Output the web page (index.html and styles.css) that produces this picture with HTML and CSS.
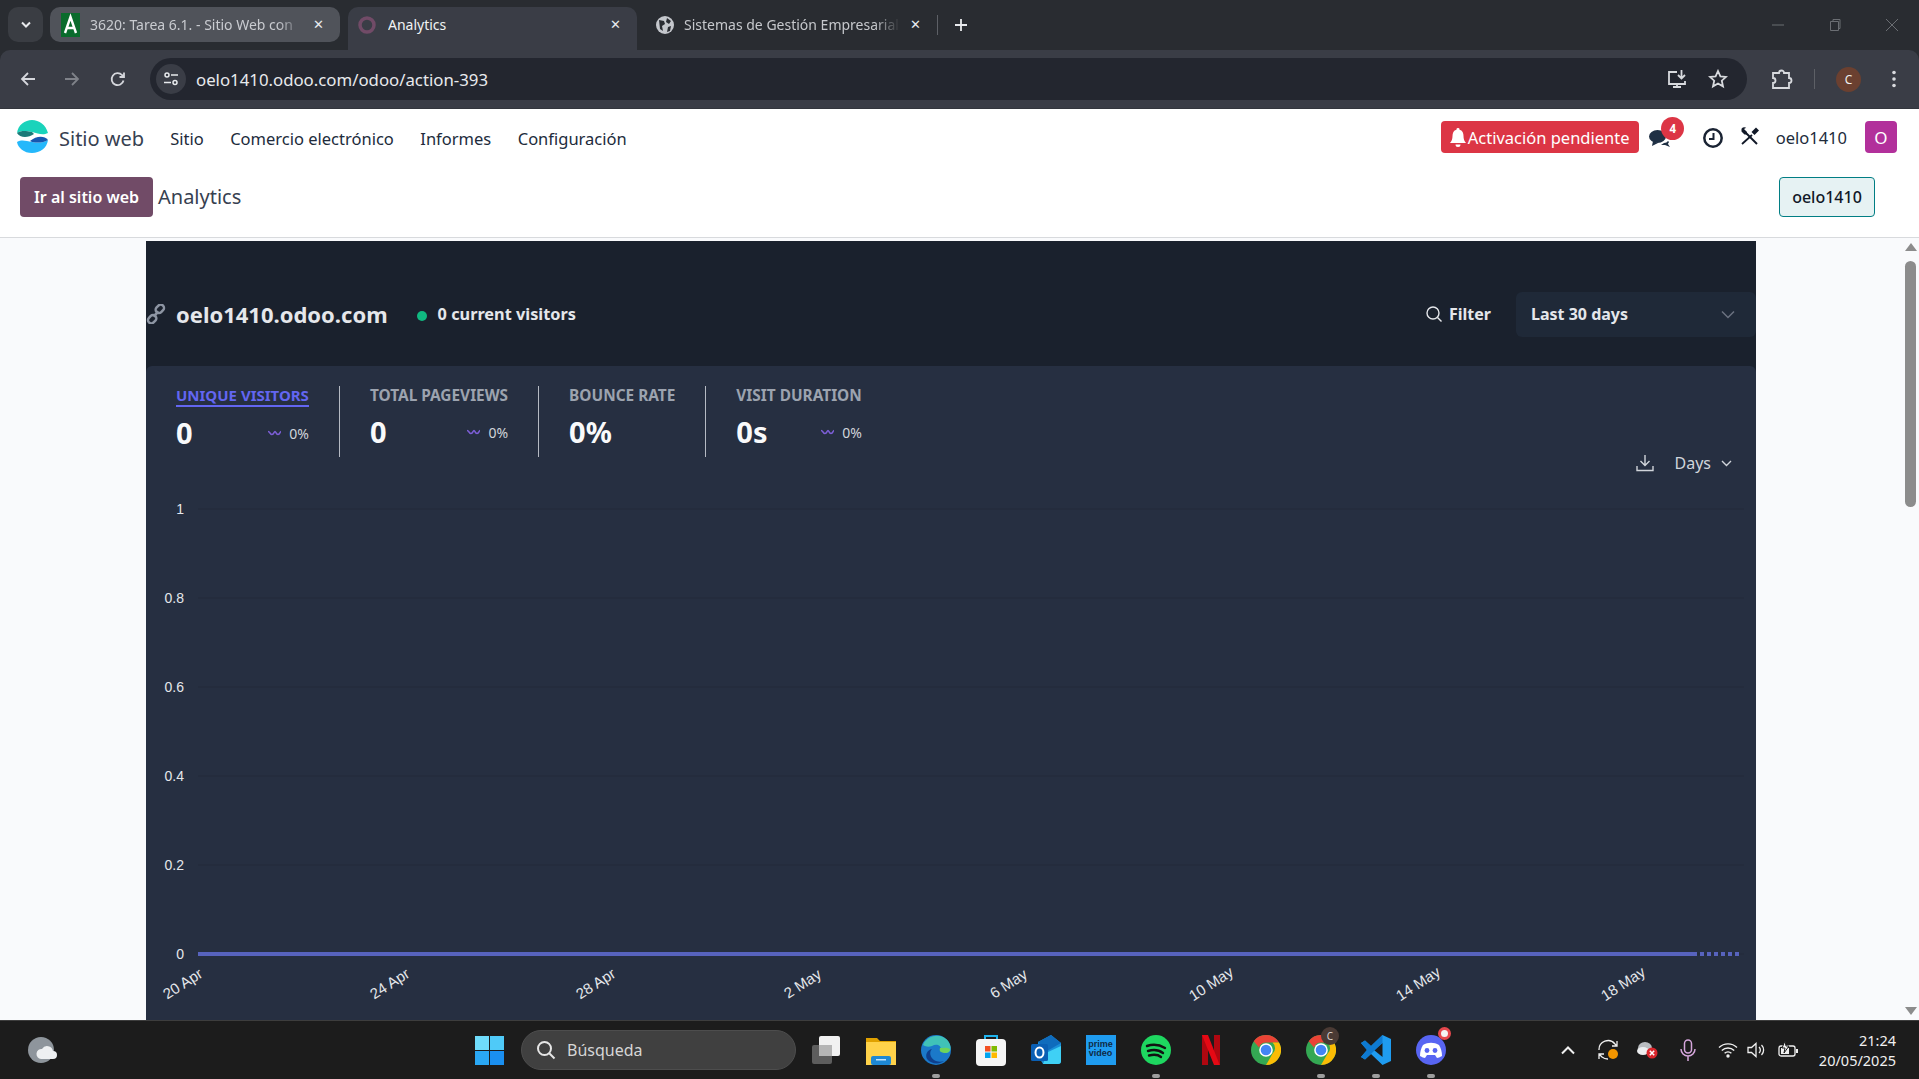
FILE: index.html
```html
<!DOCTYPE html>
<html lang="es">
<head>
<meta charset="utf-8">
<title>Analytics</title>
<link rel="stylesheet" href="styles.css">
</head>
<body>
<header class="tabstrip">
  <div class="tabsearch"><svg width="12" height="8" viewBox="0 0 12 8"><path d="M2 1.500l4 4 4-4" fill="none" stroke="#e8eaed" stroke-width="2"/></svg></div>
  <div class="tab tab-hover">
    <svg class="fav" width="19" height="24" viewBox="0 0 19 24"><rect width="19" height="24" fill="#0a6b2c"/><path d="M4 20L9.500 4 15 20M6.500 15h6" fill="none" stroke="#fff" stroke-width="2.400"/></svg>
    <span class="tabtext fade">3620: Tarea 6.1. - Sitio Web con</span>
    <span class="tabx">✕</span>
  </div>
  <div class="tab tab-active">
    <svg class="fav" width="18" height="18" viewBox="0 0 18 18"><circle cx="9" cy="9" r="7" fill="none" stroke="#714b67" stroke-width="3.500"/></svg>
    <span class="tabtext active-text">Analytics</span>
    <span class="tabx light">✕</span>
  </div>
  <div class="tab tab-plain">
    <svg class="fav" width="18" height="18" viewBox="0 0 18 18"><circle cx="9" cy="9" r="9" fill="#c4c7cc"/><path d="M3 4l5 1 1 3-3 2 1 5-3-2zM11 2l4 3-2 3-3-2zM12 11l3-1-1 5-3 1z" fill="#2a2d33"/></svg>
    <span class="tabtext fade">Sistemas de Gestión Empresarial</span>
    <span class="tabx light">✕</span>
  </div>
  <span class="tabsep"></span>
  <svg class="plus" width="14" height="14" viewBox="0 0 14 14"><path d="M7 1v12M1 7h12" stroke="#e8eaed" stroke-width="1.800"/></svg>
  <div class="winctl">
    <svg width="14" height="14" viewBox="0 0 14 14"><path d="M1 7h12" stroke="#6b6e73" stroke-width="1"/></svg>
    <svg width="14" height="14" viewBox="0 0 14 14"><path d="M2.500 3.500h8v9h-8zM5 3.500V1.500h7v9h-1.500" fill="none" stroke="#6b6e73"/></svg>
    <svg width="14" height="14" viewBox="0 0 14 14"><path d="M1 1l12 12M13 1L1 13" stroke="#6b6e73"/></svg>
  </div>
</header>

<div class="toolbar">
  <svg class="nav-ic back" width="18" height="18" viewBox="0 0 18 18"><path d="M16 9H3M9 3L3 9l6 6" fill="none" stroke="#d5d7dc" stroke-width="1.800"/></svg>
  <svg class="nav-ic fwd" width="18" height="18" viewBox="0 0 18 18"><path d="M2 9h13M9 3l6 6-6 6" fill="none" stroke="#7f8289" stroke-width="1.800"/></svg>
  <svg class="nav-ic reload" width="18" height="18" viewBox="0 0 18 18"><path d="M14.500 10.500A6 6 0 1 1 13 5l2 2M15 2.500V7h-4.500" fill="none" stroke="#d5d7dc" stroke-width="1.800"/></svg>
  <div class="omnibox">
    <span class="siteinfo"><svg width="16" height="16" viewBox="0 0 16 16"><circle cx="4" cy="4" r="2" fill="none" stroke="#e8eaed" stroke-width="1.500"/><path d="M8 4h7M1 11.500h7" stroke="#e8eaed" stroke-width="1.500"/><circle cx="12" cy="11.500" r="2" fill="none" stroke="#e8eaed" stroke-width="1.500"/></svg></span>
    <span class="url">oelo1410.odoo.com/odoo/action-393</span>
    <svg class="omni-install" width="21" height="20" viewBox="0 0 21 20"><path d="M10 3H2v12h16v-3M6 18h8M10 15v3" fill="none" stroke="#d8dade" stroke-width="1.800"/><path d="M14.500 1v8M11 6l3.500 3.500L18 6" fill="none" stroke="#d8dade" stroke-width="1.800"/></svg>
    <svg class="omni-star" width="20" height="20" viewBox="0 0 20 20"><path d="M10 2l2.400 5.300 5.600.6-4.200 3.800 1.200 5.700L10 14.500 5 17.400l1.200-5.700L2 7.900l5.600-.6z" fill="none" stroke="#d8dade" stroke-width="1.800"/></svg>
  </div>
  <svg class="ext" width="22" height="22" viewBox="0 0 22 22"><path d="M2 5h6a2.500 2.500 0 0 1 5 0h5v5a2.500 2.500 0 0 1 0 5v5H2v-5a2.500 2.500 0 0 0 0-5z" fill="none" stroke="#d8dade" stroke-width="1.800"/></svg>
  <span class="tool-sep"></span>
  <span class="profile">C</span>
  <svg class="kebab" width="4" height="18" viewBox="0 0 4 18"><circle cx="2" cy="2.500" r="1.800" fill="#d8dade"/><circle cx="2" cy="9" r="1.800" fill="#d8dade"/><circle cx="2" cy="15.500" r="1.800" fill="#d8dade"/></svg>
</div>

<nav class="odoonav">
  <svg class="applogo" width="33" height="34" viewBox="0 0 33 34"><path d="M1 13C2 5 9 0 16 0s14 5 16 13c-6 3-10 0-16-1-6-1-10-2-15 1z" fill="#1ad3bb"/><path d="M1 13c5-3 9-2 15-1l2 2c-6 4-14 4-17-1z" fill="#1c7a78"/><path d="M1 22c5-3 9-1 15 0s11 1 16-2c-1 8-8 13-16 13S2 28 1 22z" fill="#25b8fb"/><path d="M32 20c-5 3-10 3-16 2l-2-1c6-5 14-6 18-1z" fill="#1657b0"/></svg>
  <span class="appname">Sitio web</span>
  <a class="menu first">Sitio</a>
  <a class="menu">Comercio electrónico</a>
  <a class="menu">Informes</a>
  <a class="menu">Configuración</a>
  <div class="navright">
    <span class="activation"><svg width="16" height="19" viewBox="0 0 16 19"><path d="M8 0a1.500 1.500 0 0 1 1.500 1.700C12.500 2.400 13.500 5 13.500 8c0 3 .8 5 2.500 7H0c1.700-2 2.500-4 2.500-7 0-3 1-5.600 4-6.300A1.500 1.500 0 0 1 8 0zM5.500 16.500h5a2.500 2.500 0 0 1-5 0z" fill="#fff"/></svg>Activación pendiente</span>
    <span class="chat"><svg width="22" height="18" viewBox="0 0 22 18"><ellipse cx="8.500" cy="6.500" rx="8.500" ry="6.500" fill="#1f3044"/><path d="M4 11l-1 5 6-3z" fill="#1f3044"/><path d="M15 13c2 0 3-1 4-2l1 1c-.500 1-1 1.500-1 2l2 3-5-2h-4z" fill="#1f3044"/></svg><span class="badge">4</span></span>
    <svg class="clock" width="20" height="20" viewBox="0 0 20 20"><circle cx="10" cy="10" r="8.700" fill="none" stroke="#1a2333" stroke-width="2.500"/><path d="M10.500 5v6H6" fill="none" stroke="#1a2333" stroke-width="2"/></svg>
    <svg class="tools" width="19" height="19" viewBox="0 0 19 19"><path d="M4.500 4.500L17 17" stroke="#111827" stroke-width="2"/><path d="M1.500 1.800v2.700l3 3h2.500V5L4 2 6.200.8A4 4 0 0 0 1.500 1.800z" fill="#111827"/><path d="M17.500 2l-4.500 4.500" stroke="#111827" stroke-width="4.200"/><path d="M12 8L2 17" stroke="#111827" stroke-width="1.800"/></svg>
    <span class="username">oelo1410</span>
    <span class="avatar">O</span>
  </div>
</nav>

<div class="controlpanel">
  <a class="gobtn">Ir al sitio web</a>
  <span class="cp-title">Analytics</span>
  <a class="sitebtn">oelo1410</a>
</div>

<div class="viewport">
  <main class="scrollarea">
    <section class="plausible">
      <header class="pl-head">
        <svg class="linkic" width="20" height="20" viewBox="0 0 20 20"><g fill="none" stroke="#8d95a3" stroke-width="2.500"><rect x="9.500" y="1.500" width="9" height="6.500" rx="3.200" transform="rotate(-45 14 5)"/><rect x="1.500" y="12" width="9" height="6.500" rx="3.200" transform="rotate(-45 6 15)"/><path d="M7.500 12.500l5-5"/></g></svg>
        <span class="domain">oelo1410.odoo.com</span>
        <span class="dot"></span>
        <span class="current">0 current visitors</span>
        <span class="filter"><svg width="18" height="18" viewBox="0 0 18 18"><circle cx="8" cy="8" r="6" fill="none" stroke="#e5e7eb" stroke-width="1.400"/><path d="M12.500 12.500L16.500 16.500" stroke="#e5e7eb" stroke-width="1.400"/></svg>Filter</span>
        <div class="period"><span>Last 30 days</span><svg width="14" height="9" viewBox="0 0 14 9"><path d="M1 1.500l6 6 6-6" fill="none" stroke="#6b7280" stroke-width="1.500"/></svg></div>
      </header>
      <div class="card">
        <div class="cardtop">
          <div class="metrics">
            <div class="metric">
              <span class="mlabel selected">UNIQUE VISITORS</span>
              <div class="mrow"><b class="mval">0</b><span class="trend"><svg width="15" height="6" viewBox="0 0 15 6"><path d="M1 1.500c2 0 2 3 4 3s2-3 3-3 1 3 3 3 2-3 3-3" fill="none" stroke="#7c5ed6" stroke-width="1.500"/></svg>0%</span></div>
            </div>
            <div class="metric">
              <span class="mlabel">TOTAL PAGEVIEWS</span>
              <div class="mrow"><b class="mval">0</b><span class="trend"><svg width="15" height="6" viewBox="0 0 15 6"><path d="M1 1.500c2 0 2 3 4 3s2-3 3-3 1 3 3 3 2-3 3-3" fill="none" stroke="#7c5ed6" stroke-width="1.500"/></svg>0%</span></div>
            </div>
            <div class="metric">
              <span class="mlabel">BOUNCE RATE</span>
              <div class="mrow"><b class="mval">0%</b></div>
            </div>
            <div class="metric last">
              <span class="mlabel">VISIT DURATION</span>
              <div class="mrow"><b class="mval">0s</b><span class="trend"><svg width="15" height="6" viewBox="0 0 15 6"><path d="M1 1.500c2 0 2 3 4 3s2-3 3-3 1 3 3 3 2-3 3-3" fill="none" stroke="#7c5ed6" stroke-width="1.500"/></svg>0%</span></div>
            </div>
          </div>
          <div class="chartctl">
            <svg width="18" height="18" viewBox="0 0 18 18"><path d="M9 1v10M4.500 7L9 11.500 13.500 7M1 12v4.500h16V12" fill="none" stroke="#d1d5db" stroke-width="1.400"/></svg>
            <span class="days">Days</span>
            <svg width="11" height="7" viewBox="0 0 11 7"><path d="M1 1l4.500 4.500L10 1" fill="none" stroke="#d1d5db" stroke-width="1.400"/></svg>
          </div>
        </div>
        <svg class="chart" width="1610" height="546" viewBox="0 0 1610 546">
          <g class="grid">
            <line x1="52" x2="1598" y1="34" y2="34"/><line x1="52" x2="1598" y1="123" y2="123"/><line x1="52" x2="1598" y1="212" y2="212"/><line x1="52" x2="1598" y1="301" y2="301"/><line x1="52" x2="1598" y1="390" y2="390"/><line x1="52" x2="1598" y1="479" y2="479"/>
          </g>
          <g class="ylabels">
            <text x="38" y="39">1</text><text x="38" y="128">0.8</text><text x="38" y="217">0.6</text><text x="38" y="306">0.4</text><text x="38" y="395">0.2</text><text x="38" y="484">0</text>
          </g>
          <line class="series" x1="52" x2="1547" y1="479" y2="479"/>
          <line class="series dashed" x1="1547" x2="1596" y1="479" y2="479"/>
          <g class="xlabels">
            <text transform="translate(39.500 513) rotate(-33)">20 Apr</text>
            <text transform="translate(246.500 513) rotate(-33)">24 Apr</text>
            <text transform="translate(452.500 513) rotate(-33)">28 Apr</text>
            <text transform="translate(659.500 513) rotate(-33)">2 May</text>
            <text transform="translate(865.500 513) rotate(-33)">6 May</text>
            <text transform="translate(1068 513) rotate(-33)">10 May</text>
            <text transform="translate(1275 513) rotate(-33)">14 May</text>
            <text transform="translate(1480 513) rotate(-33)">18 May</text>
          </g>
        </svg>
      </div>
    </section>
  </main>
  <aside class="scrollbar">
    <span class="arrow-up"></span>
    <span class="thumb"></span>
    <span class="arrow-down"></span>
  </aside>
</div>

<footer class="taskbar">
  <svg class="weather" width="30" height="30" viewBox="0 0 30 30"><ellipse cx="14" cy="15" rx="13" ry="13" fill="#8e959c"/><path d="M14 24a5 5 0 0 1 1-10 6 6 0 0 1 11 2 4 4 0 0 1 0 8z" fill="#eef0f2"/></svg>
  <svg class="winlogo" width="29" height="29" viewBox="0 0 29 29"><rect width="14" height="14" fill="#6fdcfb"/><rect x="15" width="14" height="14" fill="#4fcaf8"/><rect y="15" width="14" height="14" fill="#2aa8f5"/><rect x="15" y="15" width="14" height="14" fill="#1a8ff0"/></svg>
  <div class="search"><svg width="20" height="20" viewBox="0 0 20 20"><circle cx="8.500" cy="8.500" r="6.500" fill="none" stroke="#e6e6e6" stroke-width="2"/><path d="M13 13l5.500 5.500" stroke="#e6e6e6" stroke-width="2"/></svg><span>Búsqueda</span></div>
  <div class="apps">
    <span class="app"><svg width="30" height="30" viewBox="0 0 30 30"><rect x="1" y="10" width="20" height="19" rx="2" fill="#5d5d5d"/><rect x="8" y="1" width="21" height="20" rx="2" fill="#f1f1f1"/><rect x="8" y="10" width="13" height="11" fill="#b5b5b5"/></svg></span>
    <span class="app"><svg width="30" height="30" viewBox="0 0 30 30"><path d="M0 3h11l3 3h16v25H0z" fill="#e0a100"/><rect y="7" width="30" height="23" fill="#ffd24a"/><rect x="5" y="21" width="20" height="9" rx="2" fill="#1e88d4"/><rect x="10" y="24" width="10" height="1.500" fill="#bfe3ff"/></svg></span>
    <span class="app running"><svg width="30" height="30" viewBox="0 0 30 30"><circle cx="15" cy="15" r="15" fill="#1b79c9"/><path d="M2 10C5 2 15-1 22 2c6 3 9 9 7 14-2 3-7 2-9 0 1-5-4-8-9-5-3 1-6 1-9-1z" fill="#40c2b8"/><path d="M29 14c0 4-5 5-9 3-2-1-1-4-1-4 3 0 7-1 10 1z" fill="#6fd45a"/><path d="M11 14c-3 3-2 8 2 11 3 2 7 2 10 1-5 4-13 3-17-2-2-4 0-9 5-10z" fill="#0f3f8c"/></svg></span>
    <span class="app"><svg width="30" height="32" viewBox="0 0 30 32"><path d="M9 7V2h12v5" fill="none" stroke="#1fb4ee" stroke-width="2"/><rect y="5" width="30" height="27" rx="4" fill="#f5f5f5"/><rect x="9" y="12" width="5.500" height="5.500" fill="#f25022"/><rect x="15.500" y="12" width="5.500" height="5.500" fill="#7fba00"/><rect x="9" y="18.500" width="5.500" height="5.500" fill="#00a4ef"/><rect x="15.500" y="18.500" width="5.500" height="5.500" fill="#ffb900"/></svg></span>
    <span class="app"><svg width="30" height="30" viewBox="0 0 30 30"><path d="M7 7L20 0l10 8v18a3 3 0 0 1-3 3H12l-5-8z" fill="#1a8fd8"/><path d="M20 0l10 8-14 8-9-9z" fill="#0f6cbd"/><path d="M12 29l5-12 13-6v15a3 3 0 0 1-3 3z" fill="#3fd0f5"/><rect y="9" width="17" height="17" rx="1.500" fill="#0a5fb4"/><ellipse cx="8.500" cy="17.500" rx="4" ry="5" fill="none" stroke="#fff" stroke-width="2"/></svg></span>
    <span class="app"><span class="prime">prime<br>video</span></span>
    <span class="app running"><svg width="30" height="30" viewBox="0 0 30 30"><circle cx="15" cy="15" r="15" fill="#1ed760"/><path d="M6 11c6-2 13-1 18 2M7 16c5-1.500 11-1 15 2M8 20.500c4-1 9-1 12 1.500" fill="none" stroke="#121212" stroke-width="2.400" stroke-linecap="round"/></svg></span>
    <span class="app"><svg width="18" height="30" viewBox="0 0 18 30"><path d="M0 0h6v30l-6 .8z" fill="#b00710"/><path d="M12 0h6v30.800l-6-.8z" fill="#b00710"/><path d="M0 0h6l12 30.800-6-.8z" fill="#e50914"/></svg></span>
    <span class="app"><svg width="30" height="30" viewBox="0 0 30 30"><circle cx="15" cy="15" r="15" fill="#34a853"/><path d="M15 0a15 15 0 0 1 13 7.500H15a7.500 7.500 0 0 0-7 5L2.700 6.300A15 15 0 0 1 15 0z" fill="#ea4335"/><path d="M28 7.500A15 15 0 0 1 15 30l6.500-11.200a7.500 7.500 0 0 0 0-11.300z" fill="#fbbc05"/><circle cx="15" cy="15" r="6.800" fill="#fff"/><circle cx="15" cy="15" r="5.300" fill="#4285f4"/></svg></span>
    <span class="app running"><svg width="30" height="30" viewBox="0 0 30 30"><circle cx="15" cy="15" r="15" fill="#34a853"/><path d="M15 0a15 15 0 0 1 13 7.500H15a7.500 7.500 0 0 0-7 5L2.700 6.300A15 15 0 0 1 15 0z" fill="#ea4335"/><path d="M28 7.500A15 15 0 0 1 15 30l6.500-11.200a7.500 7.500 0 0 0 0-11.300z" fill="#fbbc05"/><circle cx="15" cy="15" r="6.800" fill="#fff"/><circle cx="15" cy="15" r="5.300" fill="#4285f4"/></svg><span class="cbadge">C</span></span>
    <span class="app running"><svg width="30" height="30" viewBox="0 0 30 30"><path d="M21.500 0L30 4v22l-8.500 4L10 19l-6 5.500L0 22l6-7-6-7 4-2.500L10 11z" fill="#1f9cf0"/><path d="M21.500 8v14L13 15z" fill="#1c1c1c"/><path d="M21.500 0v8L4 24.500 0 22l6-7-6-7 4-2.500L10 11z" fill="#0e7ad1"/></svg></span>
    <span class="app running"><svg width="30" height="30" viewBox="0 0 30 30"><circle cx="15" cy="15" r="15" fill="#5865f2"/><path d="M7 10c5-3 11-3 16 0 2 3 3 7 3 11-2 1-4 2-5 2l-2-3H11l-2 3c-1 0-3-1-5-2 0-4 1-8 3-11z" fill="#fff"/><circle cx="11" cy="15.500" r="2.400" fill="#5865f2"/><circle cx="19" cy="15.500" r="2.400" fill="#5865f2"/></svg><span class="rbadge"></span></span>
  </div>
  <div class="tray">
    <svg width="16" height="10" viewBox="0 0 16 10"><path d="M2 8.500l6-6 6 6" fill="none" stroke="#f0f0f0" stroke-width="2"/></svg>
    <svg width="22" height="22" viewBox="0 0 22 22"><path d="M2 11A9 9 0 0 1 18 5l2 2M20 2v5h-5M2 15l3 3a9 9 0 0 0 6 2M2 20v-5h5" fill="none" stroke="#f0f0f0" stroke-width="1.300"/><circle cx="16" cy="15" r="5" fill="#f29500"/></svg>
    <svg width="22" height="18" viewBox="0 0 22 18"><ellipse cx="8" cy="7" rx="7" ry="6" fill="#b9bcc0"/><ellipse cx="6" cy="10" rx="6" ry="4" fill="#eceef0"/><circle cx="15" cy="12" r="5.500" fill="#d9262c"/><path d="M12.800 9.800l4.400 4.400M17.200 9.800l-4.400 4.400" stroke="#fff" stroke-width="1.500"/></svg>
    <svg width="16" height="22" viewBox="0 0 16 22"><rect x="4.500" y="1" width="7" height="13" rx="3.500" fill="none" stroke="#d6a6dc" stroke-width="1.500"/><path d="M1 10a7 7 0 0 0 14 0M8 17v5" fill="none" stroke="#d6a6dc" stroke-width="1.500"/></svg>
    <svg width="20" height="16" viewBox="0 0 20 16"><path d="M1 5.500a13 13 0 0 1 18 0M3.800 8.500a9 9 0 0 1 12.400 0M6.600 11.300a5 5 0 0 1 6.800 0" fill="none" stroke="#f0f0f0" stroke-width="1.400"/><circle cx="10" cy="14" r="1.700" fill="#f0f0f0"/></svg>
    <svg width="20" height="16" viewBox="0 0 20 16"><path d="M1 5.500h3.500L9 1.500v13l-4.500-4H1z" fill="none" stroke="#f0f0f0" stroke-width="1.300"/><path d="M12 5a4 4 0 0 1 0 6M14.500 3a7 7 0 0 1 0 10" fill="none" stroke="#f0f0f0" stroke-width="1.300"/></svg>
    <svg width="20" height="18" viewBox="0 0 20 18"><rect x="1" y="5" width="16" height="10" rx="2" fill="none" stroke="#f0f0f0" stroke-width="1.300"/><rect x="3" y="7" width="8" height="6" fill="#f0f0f0"/><rect x="18" y="8" width="2" height="4" fill="#f0f0f0"/><path d="M7 0L4 7h3l-1 5 5-7H8z" fill="#f0f0f0" stroke="#1c1c1c"/></svg>
  </div>
  <div class="clocktext"><span>21:24</span><span>20/05/2025</span></div>
</footer>
</body>
</html>
```
FILE: styles.css
```css
* { box-sizing: border-box; }
html, body { margin: 0; height: 100%; overflow: hidden; }
body { display: flex; flex-direction: column; width: 1919px; height: 1079px; font-family: "Noto Sans", "Open Sans", sans-serif; background: #292c31; }

/* browser chrome */
.tabstrip { height: 50px; flex: none; background: #292c31; display: flex; align-items: flex-start; padding-top: 7px; position: relative; color: #e8eaed; }
.tabsearch { width: 35px; height: 35px; margin-left: 8px; margin-right: 7px; background: #3a3d43; border-radius: 10px; display: flex; align-items: center; justify-content: center; }
.tab { display: flex; align-items: center; height: 35px; width: 290px; padding-left: 11px; font-size: 14px; flex: none; }
.tab-hover { background: #50535a; border-radius: 10px; color: #c9cbd0; }
.tab-active { background: #3a3d46; margin-left: 8px; width: 289px; height: 43px; padding-bottom: 8px; padding-left: 10px; border-radius: 10px 10px 0 0; color: #f1f3f4; }
.tab-active .fav { margin-right: 12px; }
.tab-plain { width: 300px; padding-left: 19px; color: #c6c8cc; }
.fav { flex: none; margin-right: 10px; }
.tabtext { flex: 1; white-space: nowrap; overflow: hidden; }
.fade { -webkit-mask-image: linear-gradient(90deg, #000 88%, transparent); mask-image: linear-gradient(90deg, #000 88%, transparent); }
.active-text { color: #f1f3f4; }
.tabx { flex: none; width: 14px; margin: 0 13px 0 10px; font-size: 13px; line-height: 1; color: #e8eaed; font-family: "DejaVu Sans", sans-serif; }
.tabsep { width: 1px; height: 20px; background: #5d6066; margin: 8px 0 0 0; flex: none; }
.plus { margin: 11px 0 0 16px; flex: none; }
.winctl { margin-left: auto; display: flex; gap: 43px; padding: 11px 20px 0 0; }

.toolbar { height: 59px; flex: none; background: #3a3d46; border-bottom: 1px solid #33363d; border-radius: 10px 10px 0 0; display: flex; align-items: center; }
.nav-ic { flex: none; }
.back { margin-left: 19px; }
.fwd { margin-left: 26px; }
.reload { margin-left: 28px; }
.omnibox { display: flex; align-items: center; width: 1597px; height: 42px; margin-left: 23px; background: #23262f; border-radius: 21px; padding-left: 6px; flex: none; }
.siteinfo { width: 30px; height: 30px; border-radius: 50%; background: #3a3d46; display: flex; align-items: center; justify-content: center; margin-right: 10px; flex: none; }
.url { color: #e8eaed; font-size: 16.800px; }
.omni-install { margin-left: auto; }
.omni-star { margin: 0 19px 0 20px; }
.ext { margin-left: 24px; flex: none; }
.tool-sep { width: 1px; height: 20px; background: #5d6066; margin: 0 21px 0 21px; flex: none; }
.profile { width: 25px; height: 25px; border-radius: 50%; background: #6b4030; color: #eee; font-size: 12px; display: flex; align-items: center; justify-content: center; flex: none; }
.kebab { margin-left: 31px; flex: none; }

/* odoo nav */
.odoonav { height: 56px; flex: none; display: flex; align-items: center; padding: 2px 22px 0 16px; background: #fff; color: #212b3b; font-size: 16.500px; }
.applogo { flex: none; margin-right: 10px; margin-top: -2px; }
.appname { font-size: 20px; color: #374151; margin-right: 26px; }
.menu { margin-right: 26.500px; color: #212b3b; white-space: nowrap; }
.navright { margin-left: auto; display: flex; align-items: center; margin-top: -2px; }
.activation { height: 32px; width: 198px; background: #dc3545; color: #fff; border-radius: 4px; display: flex; align-items: center; padding-left: 9px; gap: 2px; white-space: nowrap; font-size: 16.500px; padding-top: 1px; }
.chat { position: relative; margin-left: 10px; width: 22px; height: 18px; display: block; margin-top: 3px; }
.badge { position: absolute; left: 12.500px; top: -13px; width: 23px; height: 23px; border-radius: 50%; background: #dc3545; color: #fff; font-size: 11.500px; font-weight: 700; display: flex; align-items: center; justify-content: center; }
.clock { margin-left: 32px; margin-top: 2px; }
.tools { margin-left: 17px; margin-top: -2px; }
.username { margin-left: 17px; color: #212b3b; }
.avatar { width: 32px; height: 32px; margin-left: 18px; border-radius: 4px; background: #b2309b; color: #fff; display: flex; align-items: center; justify-content: center; font-size: 17px; }

.controlpanel { height: 73px; flex: none; display: flex; align-items: flex-start; padding: 12px 44px 0 20px; border-bottom: 1px solid #d8dadd; background: #fff; }
.gobtn { height: 40px; width: 133px; background: #714b67; color: #fff; border-radius: 4px; font-weight: 600; font-size: 16px; display: flex; align-items: center; justify-content: center; }
.cp-title { margin-left: 5px; line-height: 40px; font-size: 20px; color: #374151; }
.sitebtn { margin-left: auto; height: 40px; width: 96px; border: 1px solid #017e84; border-radius: 4px; background: #e6f2f3; color: #111827; font-weight: 500; font-size: 16px; display: flex; align-items: center; justify-content: center; }

/* main */
.viewport { flex: 1; min-height: 0; display: flex; background: #f9fafc; }
.scrollarea { flex: 1; min-width: 0; display: flex; justify-content: center; padding-top: 3px; overflow: hidden; }
.plausible { width: 1610px; background: #1a212d; display: flex; flex-direction: column; }
.pl-head { height: 125px; flex: none; display: flex; align-items: center; padding-top: 21px; color: #e5e7eb; }
.linkic { margin-right: 10px; flex: none; }
.domain { font-weight: 700; font-size: 22px; }
.dot { width: 10px; height: 10px; border-radius: 50%; background: #10b981; margin: 3px 11px 0 29px; }
.current { font-weight: 700; font-size: 16.300px; }
.filter { margin-left: auto; display: flex; align-items: center; gap: 6px; font-weight: 700; font-size: 16px; }
.period { width: 240px; height: 45px; margin-left: 25px; border-radius: 6px; background: #1f2938; display: flex; align-items: center; justify-content: space-between; padding: 0 21px 0 15px; font-weight: 700; font-size: 16px; }
.card { flex: 1; min-height: 0; background: #262f41; border-radius: 6px 6px 0 0; overflow: hidden; }
.cardtop { display: flex; justify-content: space-between; height: 109px; padding: 20px 24px 0 0; }
.metrics { display: flex; height: 71px; }
.metric { padding: 0 30px; border-right: 1px solid #b5bac3; display: flex; flex-direction: column; }
.metric.last { border-right: 0; }
.mlabel { font-size: 15.400px; font-weight: 700; color: #9ca3af; line-height: 20px; white-space: nowrap; }
.mlabel.selected { font-size: 15px; color: #6366f1; border-bottom: 2px solid #6366f1; line-height: 19px; height: 21px; }
.metric .mlabel { align-self: flex-start; }
.mrow { display: flex; align-items: center; justify-content: space-between; margin-top: 8px; }
.mval { font-size: 29px; line-height: 36px; color: #f9fafb; }
.trend { font-size: 14px; color: #d1d5db; display: flex; align-items: center; gap: 7px; }
.chartctl { align-self: flex-end; display: flex; align-items: center; color: #d1d5db; font-size: 16px; height: 24px; }
.days { margin: 0 10px 0 21px; }
.chart { display: block; }
.grid line { stroke: #222b3b; stroke-width: 1; }
.ylabels text { font-family: "Liberation Sans", sans-serif; font-size: 14px; fill: #e5e7eb; text-anchor: end; }
.xlabels text { font-family: "Liberation Sans", sans-serif; font-size: 15px; fill: #e5e7eb; text-anchor: middle; }
.series { stroke: #5763bd; stroke-width: 4; }
.dashed { stroke-dasharray: 4 3; }

.scrollbar { width: 17px; flex: none; display: flex; flex-direction: column; align-items: center; padding: 5px 0; }
.thumb { width: 11px; height: 246px; border-radius: 6px; background: #8c8c8c; margin-top: 10px; }
.arrow-up { width: 0; height: 0; border-left: 6px solid transparent; border-right: 6px solid transparent; border-bottom: 8px solid #8c8c8c; }
.arrow-down { width: 0; height: 0; border-left: 6px solid transparent; border-right: 6px solid transparent; border-top: 8px solid #8c8c8c; margin-top: auto; }

/* taskbar */
.taskbar { height: 59px; flex: none; background: #1c1c1c; border-top: 1px solid #3d3d3d; display: flex; align-items: center; color: #f0f0f0; }
.weather { margin-left: 27px; flex: none; }
.winlogo { margin-left: 418px; flex: none; }
.search { width: 275px; height: 40px; margin-left: 17px; border-radius: 20px; background: #404040; border: 1px solid #4d4d4d; display: flex; align-items: center; gap: 11px; padding-left: 14px; font-size: 16px; color: #d6d6d6; flex: none; }
.apps { display: flex; margin-left: 2px; }
.app { width: 55px; height: 50px; display: flex; align-items: center; justify-content: center; position: relative; }
.app.running::after { content: ""; position: absolute; left: 24px; bottom: -3px; width: 8px; height: 4px; border-radius: 2px; background: #9d9d9d; }
.prime { width: 30px; height: 30px; background: #1f9cf0; color: #0f2a44; font-size: 9px; line-height: 9px; font-weight: 700; text-align: center; padding-top: 5px; font-family: "Liberation Sans", sans-serif; }
.cbadge { position: absolute; left: 28px; top: 2px; width: 18px; height: 18px; border-radius: 50%; background: #4a3a34; color: #d8d0cc; font-size: 10px; display: flex; align-items: center; justify-content: center; }
.rbadge { position: absolute; left: 35px; top: 2px; width: 13px; height: 13px; border-radius: 50%; background: #f4f4f4; border: 3px solid #e5484d; }
.tray { margin-left: auto; display: grid; grid-template-columns: 40px 40px 40px 40px 40px 18px 44px; justify-items: center; align-items: center; }
.clocktext { width: 109px; padding-right: 23px; display: flex; flex-direction: column; align-items: flex-end; font-size: 14.500px; line-height: 20px; color: #f0f0f0; }
```
